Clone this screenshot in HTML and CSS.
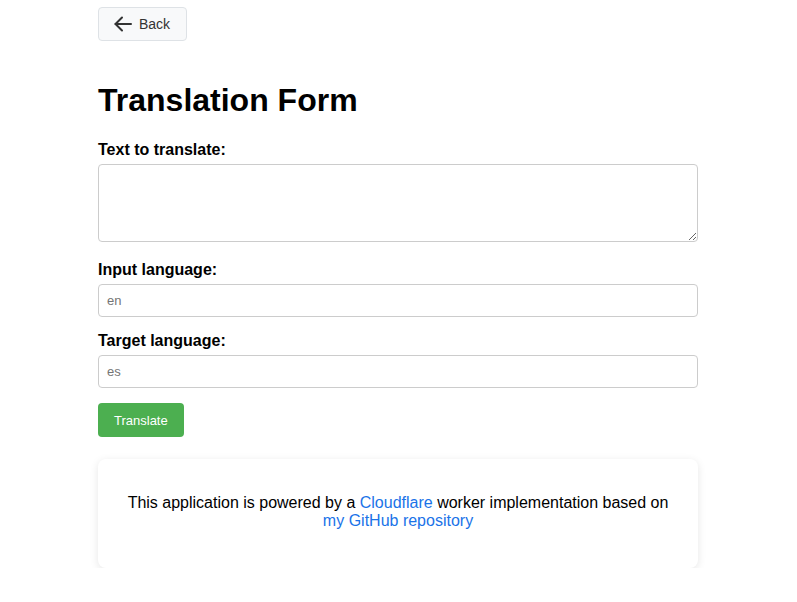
FILE: index.html
```html
<!DOCTYPE html>
<html lang="en">
<head>
<meta charset="utf-8">
<title>Translation Form</title>
<link rel="stylesheet" href="styles.css">
</head>
<body>
<div class="container">
  <button class="back-btn" type="button">
    <svg class="back-icon" width="18" height="16" viewBox="0 0 18 16" fill="none" stroke="#333" stroke-width="2" stroke-linecap="round" stroke-linejoin="round"><path d="M17 8H1.5"/><path d="M8 1.5L1.5 8L8 14.5"/></svg>
    <span>Back</span>
  </button>
  <h1 class="title">Translation Form</h1>
  <form class="form">
    <label class="label" for="text">Text to translate:</label>
    <textarea id="text" class="textarea"></textarea>
    <label class="label" for="src">Input language:</label>
    <input id="src" class="input" type="text" placeholder="en">
    <label class="label" for="tgt">Target language:</label>
    <input id="tgt" class="input" type="text" placeholder="es">
    <button class="submit" type="button">Translate</button>
  </form>
  <div class="card">
    <p class="card-text">This application is powered by a <a href="#">Cloudflare</a> worker implementation based on <a href="#">my GitHub repository</a></p>
  </div>
</div>
</body>
</html>
```
FILE: styles.css
```css
* { box-sizing: border-box; }
html, body { margin: 0; padding: 0; background: #fff; }
body { font-family: Arial, "Liberation Sans", sans-serif; color: #000; padding-right: 1px; }
.container { width: 600px; margin: 0 auto; padding-top: 7px; }
.back-btn {
  display: inline-flex; align-items: center; gap: 7px;
  height: 34px; padding: 0 16px 0 15px;
  background: #f8f9fa; border: 1px solid #dee2e6; border-radius: 4px;
  font-family: Arial, "Liberation Sans", sans-serif; font-size: 14px; color: #333;
}
.back-icon { display: block; flex: none; }
.title { font-size: 32px; font-weight: bold; margin: 41px 0 0; line-height: 37px; }
.form { display: flex; flex-direction: column; align-items: flex-start; margin-top: 22px; }
.label { font-weight: bold; font-size: 16px; line-height: 18px; margin-bottom: 5px; }
.textarea {
  width: 600px; height: 78px; border: 1px solid #ccc; border-radius: 4px;
  padding: 8px; font-family: Arial, "Liberation Sans", sans-serif; font-size: 13px;
  margin-bottom: 19px; resize: vertical;
}
.input {
  width: 600px; height: 33px; border: 1px solid #ccc; border-radius: 4px;
  padding: 0 8px; font-family: Arial, "Liberation Sans", sans-serif; font-size: 13px;
  margin-bottom: 15px;
}
.input::placeholder { color: #757575; }
.submit {
  height: 34px; padding: 0 16px; background: #4caf50; color: #fff; border: none;
  border-radius: 4px; font-family: Arial, "Liberation Sans", sans-serif; font-size: 13px;
}
.card {
  margin-top: 22px; background: #fff; border-radius: 8px;
  box-shadow: 0 2px 8px rgba(0,0,0,0.1); padding: 35px 20px 38px; text-align: center;
}
.card-text { margin: 0; font-size: 16px; line-height: 18px; }
.card-text a { color: #1a73e8; text-decoration: none; }
```
